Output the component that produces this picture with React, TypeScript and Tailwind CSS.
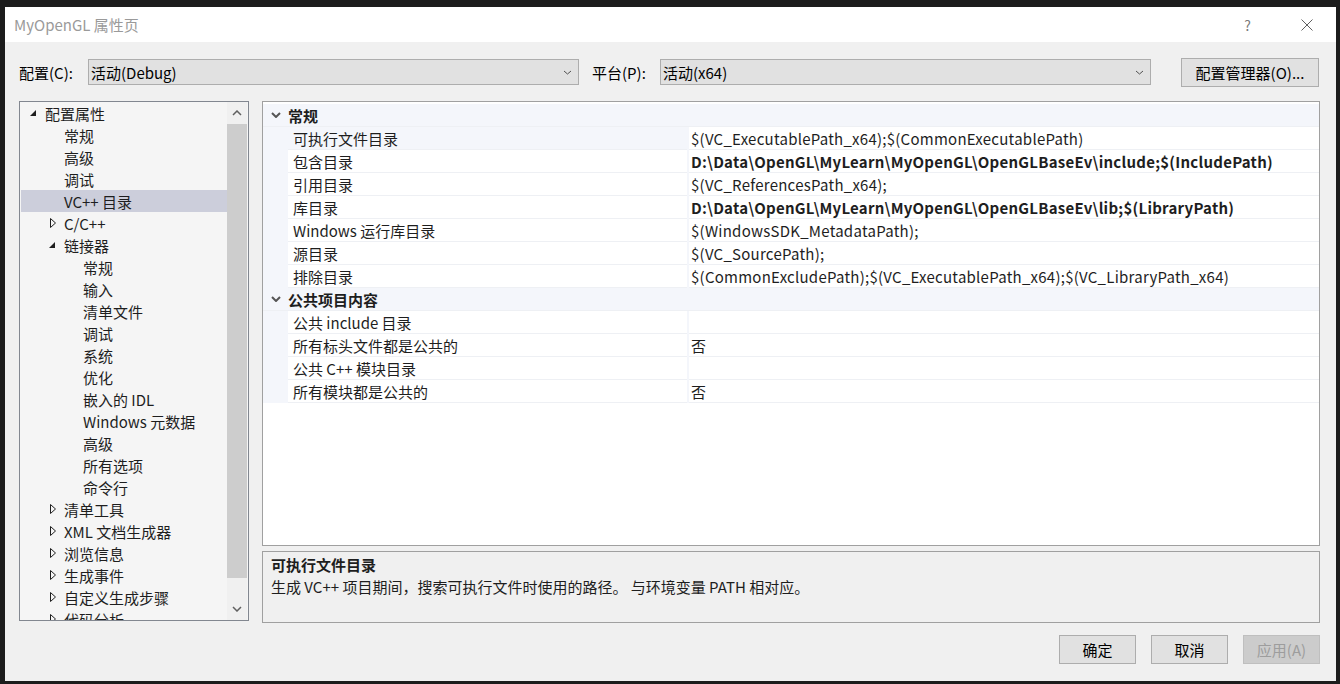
import React from "react";

const FONT = { fontFamily: '"Noto Sans CJK SC", "Noto Sans", sans-serif' };

function Chevron({ up = false, className = "", stroke = "#606060", w = 10, h = 6, sw = 1.3 }: { up?: boolean; className?: string; stroke?: string; w?: number; h?: number; sw?: number }) {
  return (
    <svg width={w} height={h} viewBox={`0 0 ${w} ${h}`} className={className}>
      <polyline
        points={up ? `1,${h - 1} ${w / 2},1 ${w - 1},${h - 1}` : `1,1 ${w / 2},${h - 1} ${w - 1},1`}
        fill="none"
        stroke={stroke}
        strokeWidth={sw}
      />
    </svg>
  );
}

function Expanded() {
  return (
    <svg width="8" height="8" viewBox="0 0 8 8">
      <polygon points="7,1 7,7 1,7" fill="#1e1e1e" />
    </svg>
  );
}

function Collapsed() {
  return (
    <svg width="6" height="10" viewBox="0 0 6 10">
      <polygon points="0.5,0.5 5.5,5 0.5,9.5" fill="none" stroke="#1e1e1e" strokeWidth="1" />
    </svg>
  );
}

type TreeItem = { label: string; level: number; state?: "open" | "closed"; selected?: boolean };

const tree: TreeItem[] = [
  { label: "配置属性", level: 0, state: "open" },
  { label: "常规", level: 1 },
  { label: "高级", level: 1 },
  { label: "调试", level: 1 },
  { label: "VC++ 目录", level: 1, selected: true },
  { label: "C/C++", level: 1, state: "closed" },
  { label: "链接器", level: 1, state: "open" },
  { label: "常规", level: 2 },
  { label: "输入", level: 2 },
  { label: "清单文件", level: 2 },
  { label: "调试", level: 2 },
  { label: "系统", level: 2 },
  { label: "优化", level: 2 },
  { label: "嵌入的 IDL", level: 2 },
  { label: "Windows 元数据", level: 2 },
  { label: "高级", level: 2 },
  { label: "所有选项", level: 2 },
  { label: "命令行", level: 2 },
  { label: "清单工具", level: 1, state: "closed" },
  { label: "XML 文档生成器", level: 1, state: "closed" },
  { label: "浏览信息", level: 1, state: "closed" },
  { label: "生成事件", level: 1, state: "closed" },
  { label: "自定义生成步骤", level: 1, state: "closed" },
  { label: "代码分析", level: 1, state: "closed" },
];

type Row = { cat?: boolean; name: string; value?: string; bold?: boolean; selected?: boolean };

const rows: Row[] = [
  { cat: true, name: "常规" },
  { name: "可执行文件目录", value: "$(VC_ExecutablePath_x64);$(CommonExecutablePath)", selected: true },
  { name: "包含目录", value: "D:\\Data\\OpenGL\\MyLearn\\MyOpenGL\\OpenGLBaseEv\\include;$(IncludePath)", bold: true },
  { name: "引用目录", value: "$(VC_ReferencesPath_x64);" },
  { name: "库目录", value: "D:\\Data\\OpenGL\\MyLearn\\MyOpenGL\\OpenGLBaseEv\\lib;$(LibraryPath)", bold: true },
  { name: "Windows 运行库目录", value: "$(WindowsSDK_MetadataPath);" },
  { name: "源目录", value: "$(VC_SourcePath);" },
  { name: "排除目录", value: "$(CommonExcludePath);$(VC_ExecutablePath_x64);$(VC_LibraryPath_x64)" },
  { cat: true, name: "公共项目内容" },
  { name: "公共 include 目录", value: "" },
  { name: "所有标头文件都是公共的", value: "否" },
  { name: "公共 C++ 模块目录", value: "" },
  { name: "所有模块都是公共的", value: "否" },
];

function Select({ text, className = "" }: { text: string; className?: string }) {
  return (
    <div className={`h-[26px] bg-[#e1e1e1] border border-[#adadad] flex items-center pl-[2px] pr-[6px] ${className}`}>
      <span className="flex-1 text-[15px] text-black leading-none">{text}</span>
      <Chevron w={9} h={5} stroke="#505050" sw={1} />
    </div>
  );
}

function Button({ text, className = "", disabled = false }: { text: string; className?: string; disabled?: boolean }) {
  return (
    <div
      className={`h-[29px] border flex items-center justify-center text-[15px] leading-none ${
        disabled ? "bg-[#cccccc] border-[#bfbfbf] text-[#9d9d9d]" : "bg-[#e1e1e1] border-[#adadad] text-black"
      } ${className}`}
    >
      {text}
    </div>
  );
}

export default function App() {
  return (
    <div className="w-[1340px] h-[684px] bg-[#1c1c1c] pt-[7px] pl-[5px] overflow-hidden" style={FONT}>
      <div className="w-[1331px] h-[674px] bg-[#f0f0f0] flex flex-col">
        {/* Title bar */}
        <div className="h-[35px] bg-white flex items-center pl-[9px] shrink-0">
          <span className="text-[15px] text-[#9a9a9a] leading-none flex-1">MyOpenGL 属性页</span>
          <span className="text-[14px] text-[#7a7a7a] leading-none mr-[50px]">?</span>
          <svg width="12" height="12" viewBox="0 0 12 12" className="mr-[23px]">
            <path d="M0.5 0.5 L11.5 11.5 M11.5 0.5 L0.5 11.5" stroke="#606060" strokeWidth="1" />
          </svg>
        </div>

        {/* Config row */}
        <div className="mt-[15px] h-[30px] flex items-center pl-[14px] shrink-0">
          <span className="w-[69px] text-[15px] text-black leading-none">配置(C):</span>
          <Select text="活动(Debug)" className="w-[491px]" />
          <span className="ml-[13px] w-[68px] text-[15px] text-black leading-none">平台(P):</span>
          <Select text="活动(x64)" className="w-[491px]" />
          <Button text="配置管理器(O)..." className="ml-[30px] w-[138px]" />
        </div>

        {/* Main */}
        <div className="mt-[14px] flex pl-[14px] shrink-0">
          {/* Tree */}
          <div className="w-[230px] h-[520px] border border-[#828790] bg-[#f5f5f5] flex overflow-hidden">
            <div className="flex-1 pt-0 pl-[1px] overflow-hidden">
              {tree.map((t, i) => (
                <div
                  key={i}
                  className={`h-[22px] flex items-center shrink-0 ${t.selected ? "bg-[#cccedb]" : ""}`}
                >
                  <div
                    className={`flex items-center justify-end shrink-0 pr-[8px] ${
                      t.level === 0 ? "w-[24px]" : t.level === 1 ? "w-[43px]" : "w-[62px]"
                    }`}
                  >
                    {t.state === "open" && <Expanded />}
                    {t.state === "closed" && <Collapsed />}
                  </div>
                  <span className="text-[15px] text-[#1e1e1e] leading-none whitespace-nowrap">{t.label}</span>
                </div>
              ))}
            </div>
            {/* Scrollbar */}
            <div className="w-[20px] bg-[#f0f0f0] flex flex-col items-center shrink-0 mr-[1px]">
              <div className="h-[22px] flex items-center justify-center">
                <Chevron up w={10} h={6} stroke="#606060" sw={1.5} />
              </div>
              <div className="w-[20px] h-[454px] bg-[#cdcdcd]" />
              <div className="flex-1" />
              <div className="h-[22px] flex items-center justify-center">
                <Chevron w={10} h={6} stroke="#606060" sw={1.5} />
              </div>
            </div>
          </div>

          {/* Right column */}
          <div className="ml-[13px] w-[1058px] flex flex-col">
            <div className="h-[445px] border border-[#a0a0a0] bg-white pt-[2px] overflow-hidden">
              {rows.map((r, i) =>
                r.cat ? (
                  <div key={i} className="h-[23px] bg-[#f4f6fb] flex items-center border-b border-[#eef0f4]">
                    <div className="w-[25px] flex justify-center shrink-0 pl-[1px]">
                      <Chevron w={10} h={6} stroke="#555555" sw={2} />
                    </div>
                    <span className="text-[15px] font-bold text-[#1e1e1e] leading-none">{r.name}</span>
                  </div>
                ) : (
                  <div key={i} className="h-[23px] flex">
                    <div className="w-[25px] bg-[#f4f6fb] shrink-0" />
                    <div
                      className={`w-[399px] shrink-0 flex items-center pl-[5px] border-b border-[#eef0f4] ${
                        r.selected ? "bg-[#f4f6fb]" : "bg-white"
                      }`}
                    >
                      <span className="text-[15px] text-[#1e1e1e] leading-none whitespace-nowrap">{r.name}</span>
                    </div>
                    <div className="w-[2px] bg-[#f4f6fb] shrink-0" />
                    <div className="flex-1 flex items-center pl-[2px] border-b border-[#eef0f4] bg-white">
                      <span
                        className={`text-[15px] text-[#1e1e1e] leading-none whitespace-nowrap tracking-[0.25px] ${r.bold ? "font-bold" : ""}`}
                      >
                        {r.value}
                      </span>
                    </div>
                  </div>
                )
              )}
            </div>
            <div className="mt-[5px] h-[72px] border border-[#a0a0a0] bg-[#f0f0f0] pl-[8px] pt-[2px]">
              <div className="h-[20px] flex items-center text-[15px] font-bold text-[#1e1e1e] leading-none">
                可执行文件目录
              </div>
              <div className="h-[24px] flex items-center text-[15px] text-[#1e1e1e] leading-none">
                生成 VC++ 项目期间，搜索可执行文件时使用的路径。 与环境变量 PATH 相对应。
              </div>
            </div>
          </div>
        </div>

        {/* Buttons */}
        <div className="mt-[12px] flex justify-end gap-[15px] pr-[16px]">
          <Button text="确定" className="w-[77px]" />
          <Button text="取消" className="w-[77px]" />
          <Button text="应用(A)" className="w-[77px]" disabled />
        </div>
      </div>
    </div>
  );
}
